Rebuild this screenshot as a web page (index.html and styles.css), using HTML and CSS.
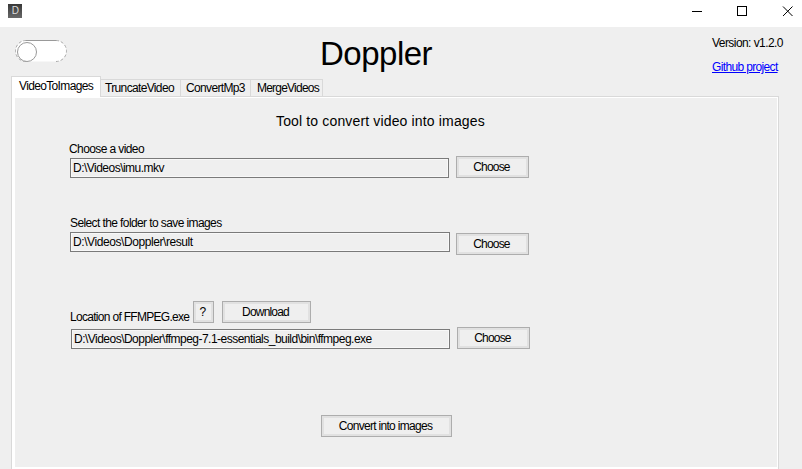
FILE: index.html
```
<!DOCTYPE html>
<html lang="en">
<head>
<meta charset="utf-8">
<title>Doppler</title>
<link rel="stylesheet" href="styles.css">
</head>
<body>
<div class="titlebar">
  <div class="app-icon"><span>D</span></div>
  <svg class="window-controls" width="102" height="12" viewBox="0 0 102 12" fill="none" stroke="#000" shape-rendering="crispEdges">
    <path d="M0 5.500h10M45.500 .5h9v9h-9z"/>
    <path d="M91 .5l9.500 9.500M100.500 .5l-9.500 9.500" shape-rendering="auto"/>
  </svg>
</div>
<header class="header">
  <svg class="toggle" width="54" height="24" viewBox="0 0 54 24">
    <rect x="1.500" y="1.500" width="51" height="21" rx="10.500" fill="#fff"/>
    <path d="M12 1.500h30" stroke="#999" fill="none"/>
    <path d="M42 1.500a10.500 10.500 0 0 1 0 21M12 22.500a10.500 10.500 0 0 1 0-21" stroke="#aaa" stroke-dasharray="3 2" fill="none"/>
    <circle cx="13" cy="13" r="9.500" fill="#fff" stroke="#999"/>
  </svg>
  <h1>Doppler</h1>
  <div class="about">
    <div class="version">Version: v1.2.0</div>
    <a class="github" href="#">Github project</a>
  </div>
</header>
<nav class="tabs">
  <div class="tab active">VideoToImages</div>
  <div class="tab truncate">TruncateVideo</div>
  <div class="tab convert">ConvertMp3</div>
  <div class="tab merge">MergeVideos</div>
</nav>
<main class="panel">
  <div class="page">
    <h2>Tool to convert video into images</h2>
    <section class="field video">
      <label>Choose a video</label>
      <div class="row"><div class="input">D:\Videos\imu.mkv</div><button class="choose">Choose</button></div>
    </section>
    <section class="field folder">
      <label>Select the folder to save images</label>
      <div class="row"><div class="input">D:\Videos\Doppler\result</div><button class="choose">Choose</button></div>
    </section>
    <section class="field ffmpeg">
      <div class="tools"><label>Location of FFMPEG.exe</label><button class="help">?</button><button class="download">Download</button></div>
      <div class="row"><div class="input">D:\Videos\Doppler\ffmpeg-7.1-essentials_build\bin\ffmpeg.exe</div><button class="choose">Choose</button></div>
    </section>
    <button class="submit">Convert into images</button>
  </div>
</main>
</body>
</html>
```
FILE: styles.css
```
* { box-sizing: border-box; }
body {
  margin: 0;
  height: 469px;
  overflow: hidden;
  background: #efefef;
  color: #000;
  font: 12px/14px "Liberation Sans", Arial, sans-serif;
  letter-spacing: -0.65px;
  white-space: nowrap;
}
.titlebar {
  display: flex;
  justify-content: space-between;
  height: 27px;
  padding: 4px 8px 0;
  background: #fff;
}
.app-icon {
  width: 14px;
  height: 14px;
  background: linear-gradient(#383838, #686868);
  color: #ddd;
  font-size: 10px;
  line-height: 13px;
  text-align: center;
}
.window-controls { margin-top: 2px; }
.header {
  display: flex;
  height: 49px;
}
.toggle { margin: 12px 0 0 14px; }
h1 {
  width: 113px;
  margin: 9px 0 0 252px;
  font-size: 33px;
  font-weight: 400;
  line-height: 36px;
  letter-spacing: -0.5px;
}
.about { margin: 9px 0 0 279px; }
.version { letter-spacing: -0.56px; }
.github {
  display: block;
  margin-top: 10px;
  color: #00f;
}
.tabs {
  display: flex;
  align-items: flex-end;
  height: 20px;
  padding-left: 11px;
}
.tab {
  height: 17px;
  padding: 1px 0 0 4px;
  border: solid #d9d9d9;
  border-width: 1px 1px 0 0;
}
.tab.active {
  position: relative;
  width: 90px;
  height: 21px;
  margin-bottom: -1px;
  padding: 2px 0 0 7px;
  border-left-width: 1px;
  background: #fff;
}
.truncate { width: 80px; }
.convert { width: 70px; padding-left: 5px; }
.merge { width: 72px; padding-left: 6px; letter-spacing: -0.78px; }
.panel {
  width: 768px;
  height: 374px;
  margin-left: 11px;
  padding: 1px 1px 3px 3px;
  border: 1px solid #d9d9d9;
  background: #fff;
}
.page {
  height: 369px;
  padding: 14px 0 0 55px;
  background: #efefef;
}
h2 {
  margin: 0 0 0 206px;
  font-size: 14px;
  font-weight: 400;
  line-height: 18px;
  letter-spacing: 0.15px;
}
.field label { display: block; letter-spacing: -0.6px; }
.row { display: flex; }
.input {
  width: 379px;
  height: 20px;
  padding: 2px 0 0 2px;
  border: 1px solid #7a7a7a;
  box-shadow: inset 0 0 0 1px #f8f8f8;
  letter-spacing: -0.52px;
}
button {
  height: 22px;
  padding: 0 2px 0 0;
  border: 1px solid #adadad;
  border-radius: 0;
  background: #efefef;
  box-shadow: inset 0 0 0 2px #e1e1e1;
  color: #000;
  font: inherit;
  letter-spacing: -0.82px;
}
.choose { width: 73px; margin-left: 7px; }
.video { height: 74px; margin-top: 12px; }
.video label { margin: 0 0 2px -1px; }
.video .choose { margin-top: -2px; }
.folder { height: 85px; }
.folder label { margin-bottom: 2px; }
.folder .input { width: 380px; letter-spacing: -0.42px; }
.folder .choose { margin: 1px 0 0 6px; }
.tools { display: flex; align-items: flex-start; height: 28px; }
.tools label { width: 123px; padding-top: 9px; letter-spacing: -0.7px; }
.help { width: 21px; }
.download { width: 89px; margin-left: 8px; }
.ffmpeg { height: 114px; }
.ffmpeg .row { padding-left: 1px; }
.ffmpeg .choose { margin-top: -2px; }
.submit {
  display: block;
  width: 131px;
  margin-left: 251px;
  letter-spacing: -0.7px;
}
```
